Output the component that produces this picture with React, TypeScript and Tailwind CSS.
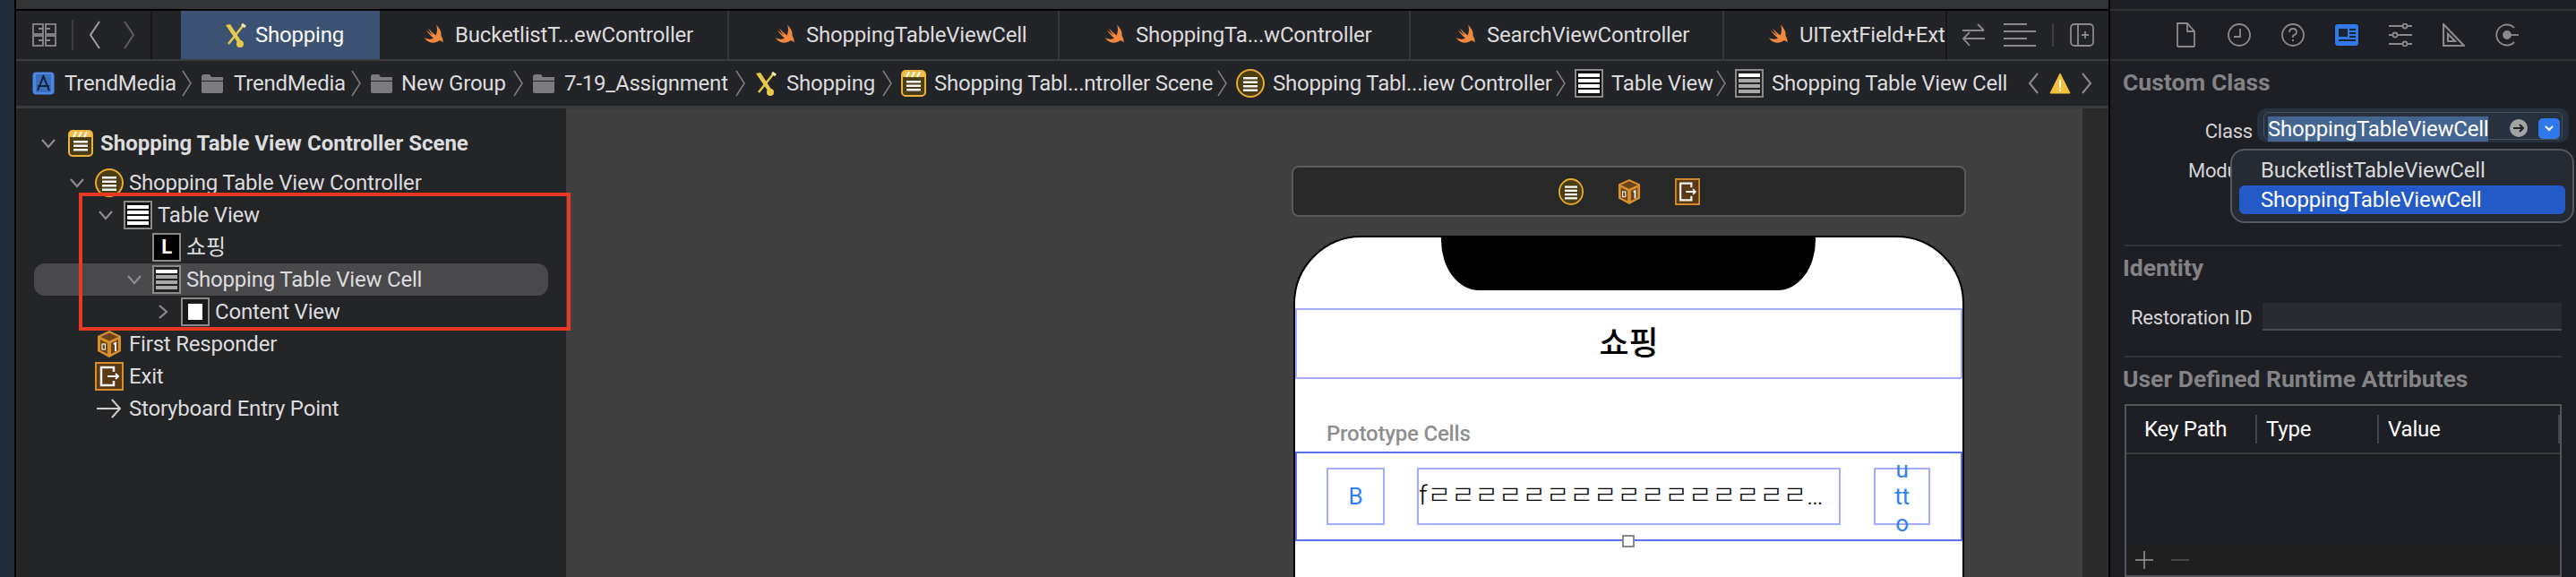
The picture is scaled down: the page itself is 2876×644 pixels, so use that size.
import React from 'react';

const SwiftIcon = () => (
  <svg width="26" height="26" viewBox="0 0 24 24" className="shrink-0">
    <path fill="#f0873f" d="M14 1.500C17.500 5 19.600 9 19 13c1.600 2.200 2.200 5 1.600 7-1-1.800-2.800-2.600-4-2-2.600 2-6.600 2.600-10 1.200C4.400 18.200 2.800 16.400 1.500 14.500 5 16.800 8.500 16.800 11 15.200 8 13 5.500 10 3.500 7c2.500 2.200 5 4.200 7 5.400-2-2.200-3.600-4.600-5-7.400 3 3.400 6 6 8 7.200 1.600-3 1.600-7 .5-10.700z" />
  </svg>
);

const HammerIcon = () => (
  <svg width="26" height="30" viewBox="0 0 26 30" className="shrink-0">
    <path d="M2 4 L7 3 L20 23 L17 26 Z" fill="#e8c84a" />
    <circle cx="18" cy="25" r="4" fill="#e8c84a" />
    <path d="M21 5 L5 25" stroke="#e8c84a" strokeWidth="2.500" />
    <path d="M20 3 L24 6" stroke="#f3e7b0" strokeWidth="3" />
  </svg>
);

const AppIcon = () => (
  <svg width="25" height="26" viewBox="0 0 25 26" className="shrink-0">
    <rect x="0.500" y="0.500" width="24" height="25" rx="4" fill="#4a88e4" />
    <rect x="4" y="3" width="17" height="20" fill="#3a6fc0" />
    <path d="M13 4 L6 21 M12 4 L19 21 M6 16 H19" stroke="#12233f" strokeWidth="2" fill="none" />
  </svg>
);

const FolderIcon = () => (
  <svg width="26" height="24" viewBox="0 0 26 24" className="shrink-0">
    <path d="M1 5 Q1 2 4 2 H10 L12 5 H25 V9 H1 Z" fill="#7c7c7e" />
    <path d="M1 10 H25 V21 Q25 23 23 23 H3 Q1 23 1 21 Z" fill="#7c7c7e" />
  </svg>
);

const Bars = ({ y, x = 8, w = 14 }: { y: number[]; x?: number; w?: number }) => (
  <>
    {y.map((v) => (
      <rect key={v} x={x} y={v} width={w} height="2.500" fill="#f5f5f5" />
    ))}
  </>
);

const SceneIcon = () => (
  <svg width="28" height="30" viewBox="0 0 28 30" className="shrink-0">
    <rect x="1" y="1" width="26" height="28" rx="4" fill="#4b3d14" stroke="#eeb23a" strokeWidth="2" />
    <rect x="2" y="2" width="24" height="6" fill="#f0c04a" />
    <path d="M6 8 L9 2 M12 8 L15 2 M18 8 L21 2" stroke="#fff" strokeWidth="2" />
    <Bars y={[12, 16.500, 21]} x={6} w={16} />
  </svg>
);

const ControllerIcon = ({ w = 32, h = 32 }: { w?: number; h?: number }) => (
  <svg width={w} height={h} viewBox="0 0 32 32" preserveAspectRatio="none" className="shrink-0">
    <ellipse cx="16" cy="16" rx="15" ry="15" fill="#4b3d14" stroke="#e8ac32" strokeWidth="2" />
    <Bars y={[9, 13.500, 18, 22.500]} x={8} w={16} />
  </svg>
);

const CubeIcon = ({ w = 28, h = 32 }: { w?: number; h?: number }) => (
  <svg width={w} height={h} viewBox="0 0 28 32" preserveAspectRatio="none" className="shrink-0">
    <path d="M14 1 L27 7 V24 L14 31 L1 24 V7 Z" fill="#d98e30" />
    <path d="M14 3.500 L24 8 L14 12.500 L4 8 Z" fill="#6b4518" />
    <path d="M4 11 L12 15 V27 L4 23 Z" fill="#6b4518" />
    <path d="M16 15 L24 11 V23 L16 27 Z" fill="#6b4518" />
    <rect x="6" y="16" width="3.500" height="6" fill="none" stroke="#f2f2f2" strokeWidth="1.200" />
    <path d="M19 16 L21 15 V24" stroke="#f2f2f2" strokeWidth="2" fill="none" />
  </svg>
);

const ExitIcon = ({ w = 32, h = 32 }: { w?: number; h?: number }) => (
  <svg width={w} height={h} viewBox="0 0 32 32" preserveAspectRatio="none" className="shrink-0">
    <rect x="1" y="1" width="30" height="30" fill="#5a3a16" stroke="#d98e30" strokeWidth="2" />
    <path d="M21 11 V6 H7 V26 H21 V21" fill="none" stroke="#f2f2f2" strokeWidth="2.500" />
    <path d="M14 16 H26 M23 13 L26 16 L23 19" fill="none" stroke="#f2f2f2" strokeWidth="2" />
  </svg>
);

const TableIcon = () => (
  <svg width="32" height="32" viewBox="0 0 32 32" className="shrink-0">
    <rect x="1" y="1" width="30" height="30" fill="#111" stroke="#8a8a8a" strokeWidth="2" />
    <rect x="4" y="5" width="24" height="4" fill="#fff" />
    <rect x="4" y="11" width="24" height="4" fill="#fff" />
    <rect x="4" y="17" width="24" height="4" fill="#fff" />
    <rect x="4" y="23" width="24" height="4" fill="#fff" />
  </svg>
);

const CellIcon = () => (
  <svg width="32" height="32" viewBox="0 0 32 32" className="shrink-0">
    <rect x="1" y="1" width="30" height="30" fill="#222" stroke="#8a8a8a" strokeWidth="2" />
    <rect x="4" y="5" width="24" height="4" fill="#fff" />
    <rect x="4" y="11" width="24" height="4" fill="#a8a8a8" />
    <rect x="4" y="17" width="24" height="4" fill="#a8a8a8" />
    <rect x="4" y="23" width="24" height="4" fill="#a8a8a8" />
  </svg>
);

const LabelIcon = () => (
  <div className="w-[32px] h-[32px] shrink-0 bg-black border-2 border-[#8a8a8a] flex items-center justify-center text-white text-[22px] font-bold leading-none">L</div>
);

const ContentIcon = () => (
  <div className="w-[32px] h-[32px] shrink-0 bg-[#1a1a1a] border-2 border-[#8a8a8a] flex items-center justify-center">
    <div className="w-[16px] h-[18px] bg-white" />
  </div>
);

const Chevron = ({ open = true, className = '' }: { open?: boolean; className?: string }) => (
  <svg width="18" height="18" viewBox="0 0 18 18" className={`shrink-0 ${className}`}>
    <path d={open ? 'M2 5 L9 13 L16 5' : 'M5 2 L13 9 L5 16'} fill="none" stroke="#8c8c8e" strokeWidth="2.200" />
  </svg>
);

const CrumbSep = () => (
  <svg width="12" height="30" viewBox="0 0 12 30" className="shrink-0">
    <path d="M1 1 L10 15 L1 29" fill="none" stroke="#7e7e80" strokeWidth="1.500" />
  </svg>
);

const Crumb = ({ icon, label, width, last }: { icon: React.ReactNode; label: string; width: string; last?: boolean }) => (
  <>
    {icon}
    <span className={`whitespace-nowrap shrink-0 ${width}`}>{label}</span>
    {!last && <CrumbSep />}
  </>
);

const tabs = [
  { label: 'BucketlistT...ewController', cls: 'w-[390px] pl-[48px] border-r-2 border-[#37383b]' },
  { label: 'ShoppingTableViewCell', cls: 'w-[369px] pl-[50px] border-r-2 border-[#37383b]' },
  { label: 'ShoppingTa...wController', cls: 'w-[392px] pl-[49px] border-r-2 border-[#37383b]' },
  { label: 'SearchViewController', cls: 'w-[350px] pl-[49px] border-r-2 border-[#37383b]' },
  { label: 'UITextField+Extension', cls: 'w-[247px] pl-[48px]' },
];

const TabBar = () => (
  <div className="h-[54px] shrink-0 flex items-stretch bg-[#232427] text-[#dcdcde]">
    <div className="w-[152px] shrink-0 flex items-center pl-[18px] border-r-2 border-[#161618]">
      <svg width="27" height="26" viewBox="0 0 27 26" fill="none" stroke="#8a8a8c" strokeWidth="1.800">
        <rect x="1" y="1" width="11" height="11" />
        <rect x="15" y="1" width="11" height="11" />
        <rect x="1" y="14" width="11" height="11" />
        <rect x="15" y="14" width="11" height="11" />
        <path d="M7 6 H12 M15 6 H20 M7 19 H12 M15 19 H20" />
      </svg>
      <div className="w-[2px] h-[34px] bg-[#3e3e40] ml-[17px]" />
      <svg width="14" height="34" viewBox="0 0 14 34" className="ml-[17px]" fill="none" stroke="#a0a0a2" strokeWidth="2">
        <path d="M12 2 L2 17 L12 32" />
      </svg>
      <svg width="14" height="34" viewBox="0 0 14 34" className="ml-[24px]" fill="none" stroke="#5e5e60" strokeWidth="2">
        <path d="M2 2 L12 17 L2 32" />
      </svg>
    </div>
    <div className="w-[32px] shrink-0" />
    <div className="w-[222px] shrink-0 bg-[#3b5272] flex items-center pl-[48px] gap-[9px] text-white">
      <HammerIcon />
      <span>Shopping</span>
    </div>
    {tabs.map((t) => (
      <div key={t.label} className={`shrink-0 flex items-center gap-[10px] whitespace-nowrap overflow-hidden ${t.cls}`}>
        <SwiftIcon />
        <span>{t.label}</span>
      </div>
    ))}
    <div className="flex-1 flex items-center border-l-2 border-[#161618] pl-[16px]">
      <svg width="27" height="28" viewBox="0 0 27 28" fill="none" stroke="#8a8a8c" strokeWidth="1.800" className="shrink-0">
        <path d="M1 9 H25 M18 2 L25 9 M26 18 H2 M9 11 L2 18 L9 26" />
      </svg>
      <svg width="36" height="26" viewBox="0 0 36 26" className="ml-[20px] shrink-0" fill="none" stroke="#8a8a8c" strokeWidth="2">
        <path d="M0 1 H26 M0 9 H36 M0 17 H26 M0 25 H36" />
      </svg>
      <div className="w-[2px] h-[26px] shrink-0 bg-[#3e3e40] ml-[18px]" />
      <svg width="27" height="26" viewBox="0 0 27 26" className="ml-[18px] shrink-0" fill="none" stroke="#8a8a8c" strokeWidth="1.800">
        <rect x="1" y="1" width="25" height="24" rx="4" />
        <path d="M9 1 V25 M13 13 H21 M17 9 V17" />
      </svg>
    </div>
  </div>
);

const Breadcrumb = () => (
  <div className="h-[52px] shrink-0 flex items-center pl-[18px] gap-[9px] bg-[#232427] border-t-2 border-[#3a3b3d] text-[#dcdcde]">
    <Crumb icon={<AppIcon />} label="TrendMedia" width="w-[122px] ml-[2px]" />
    <Crumb icon={<FolderIcon />} label="TrendMedia" width="w-[122px] ml-[2px]" />
    <Crumb icon={<FolderIcon />} label="New Group" width="w-[116px]" />
    <Crumb icon={<FolderIcon />} label="7-19_Assignment" width="w-[182px] ml-[1px]" />
    <Crumb icon={<HammerIcon />} label="Shopping" width="w-[98px] ml-[1px]" />
    <Crumb icon={<SceneIcon />} label="Shopping Tabl...ntroller Scene" width="w-[307px]" />
    <Crumb icon={<ControllerIcon />} label="Shopping Tabl...iew Controller" width="w-[307px]" />
    <Crumb icon={<TableIcon />} label="Table View" width="w-[108px]" />
    <Crumb icon={<CellIcon />} label="Shopping Table View Cell" width="w-[264px]" last />
    <svg width="12" height="24" viewBox="0 0 12 24" className="ml-[13px] shrink-0" fill="none" stroke="#8a8a8c" strokeWidth="2">
      <path d="M11 1 L2 12 L11 23" />
    </svg>
    <svg width="24" height="24" viewBox="0 0 24 24" className="ml-[3px] shrink-0">
      <path d="M12 1 L23 23 H1 Z" fill="#f4c13a" stroke="#f4c13a" strokeLinejoin="round" />
      <rect x="11" y="8" width="2" height="9" fill="#fff" />
      <rect x="11" y="18.500" width="2" height="2.500" fill="#fff" />
    </svg>
    <svg width="12" height="24" viewBox="0 0 12 24" className="ml-[3px] shrink-0" fill="none" stroke="#8a8a8c" strokeWidth="2">
      <path d="M1 1 L10 12 L1 23" />
    </svg>
  </div>
);

const Row = ({ indent, chevron, icon, label, bold, selected }: { indent: string; chevron?: 'open' | 'closed'; icon: React.ReactNode; label: string; bold?: boolean; selected?: boolean }) => (
  <div className={`relative h-[36px] flex items-center ${indent}`}>
    {selected && <div className="absolute left-[20px] w-[574px] h-[36px] rounded-[12px] bg-[#49494b]" />}
    <div className="relative w-[20px] shrink-0 flex justify-center">
      {chevron && <Chevron open={chevron === 'open'} />}
    </div>
    <div className="relative ml-[10px] flex items-center gap-[6px] whitespace-nowrap">
      <div className="w-[32px] shrink-0 flex justify-center">{icon}</div>
      <span className={bold ? 'font-bold tracking-normal' : ''}>{label}</span>
    </div>
  </div>
);

const Outline = () => (
  <div className="relative w-[614px] shrink-0 bg-[#242527] text-[#dcdcde] pt-[21px]">
    <div className="h-[44px]">
      <Row indent="pl-[26px]" chevron="open" icon={<SceneIcon />} label="Shopping Table View Controller Scene" bold />
    </div>
    <Row indent="pl-[58px]" chevron="open" icon={<ControllerIcon />} label="Shopping Table View Controller" />
    <Row indent="pl-[90px]" chevron="open" icon={<TableIcon />} label="Table View" />
    <Row indent="pl-[122px]" icon={<LabelIcon />} label="쇼핑" />
    <Row indent="pl-[122px]" chevron="open" icon={<CellIcon />} label="Shopping Table View Cell" selected />
    <Row indent="pl-[154px]" chevron="closed" icon={<ContentIcon />} label="Content View" />
    <Row indent="pl-[58px]" icon={<CubeIcon />} label="First Responder" />
    <Row indent="pl-[58px]" icon={<ExitIcon />} label="Exit" />
    <Row indent="pl-[58px]" icon={
      <svg width="28" height="24" viewBox="0 0 28 24" fill="none" stroke="#d0d0d0" strokeWidth="2"><path d="M0 12 H26 M17 2 L26 12 L17 22" /></svg>
    } label="Storyboard Entry Point" />
    {/* красная рамка поверх дерева */}
    <div className="absolute z-10 left-[70px] top-[94px] w-[549px] h-[154px] border-[4px] border-[#e83a20] pointer-events-none" />
  </div>
);

const Canvas = () => (
  <div className="flex-1 flex bg-[#404040] min-w-0 overflow-hidden">
    <div className="flex-1 pl-[810px] pt-[64px] min-w-0">
      <div className="w-[753px] h-[57px] bg-[#282828] border-2 border-[#5a5a5a] rounded-[8px] flex items-center justify-center gap-[38px]">
        <ControllerIcon w={28} h={30} />
        <CubeIcon w={26} h={30} />
        <ExitIcon w={28} h={30} />
      </div>
      <div className="relative mt-[21px] ml-[2px] w-[749px] h-[400px] bg-white border-2 border-black rounded-t-[76px]">
        <div className="absolute left-[163px] -top-[2px] w-[418px] h-[61px] bg-black rounded-bl-[42px_56px] rounded-br-[42px_56px]" />
        <div className="pt-[79px]">
          <div className="h-[79px] border-2 border-[#a3abff] flex items-center justify-center text-[36px] font-medium text-black">쇼핑</div>
        </div>
        <div className="h-[81px] pl-[35px] pt-[46px] text-[24px] font-medium text-[#8e8e90] leading-[30px]">Prototype Cells</div>
        <div className="relative h-[100px] border-2 border-[#5a70f0] flex items-center pl-[33px] text-[26px]">
          <div className="w-[65px] h-[64px] border-2 border-[#a3abff] flex items-center justify-center text-[#2f80f0]">B</div>
          <div className="ml-[36px] w-[473px] h-[64px] border-2 border-[#a3abff] flex items-center text-black whitespace-nowrap overflow-hidden">
            <span className="w-[466px] truncate font-light text-[29px]">fㄹㄹㄹㄹㄹㄹㄹㄹㄹㄹㄹㄹㄹㄹㄹㄹㄹㄹㄹㄹㄹㄹㄹ</span>
          </div>
          <div className="relative ml-[37px] w-[63px] h-[64px] border-2 border-[#a3abff] flex flex-col items-center justify-center text-[#2f80f0] leading-[30px]">
            <span>u</span>
            <span>tt</span>
            <span>o</span>
          </div>
          <div className="absolute left-[363px] -bottom-[9px] w-[14px] h-[14px] bg-white border-2 border-[#8a8a8a]" />
        </div>
      </div>
    </div>
    <div className="w-[29px] shrink-0 bg-[#2a2a2a]" />
  </div>
);

const Separator = () => <div className="h-[2px] mx-[16px] bg-[#33343a]" />;

const InspectorTabs = () => (
  <div className="h-[54px] pl-[71px] flex items-center gap-[34px]">
    <svg width="26" height="28" viewBox="0 0 26 28" fill="none" stroke="#8a8a8c" strokeWidth="1.800">
      <path d="M4 1 H15 L23 10 V26 Q23 27 22 27 H5 Q4 27 4 26 Z M15 1 V10 H23" />
    </svg>
    <svg width="26" height="26" viewBox="0 0 26 26" fill="none" stroke="#8a8a8c" strokeWidth="1.800">
      <circle cx="13" cy="13" r="12" />
      <path d="M14 6 V15 H7" />
    </svg>
    <svg width="26" height="26" viewBox="0 0 26 26" fill="none" stroke="#8a8a8c" strokeWidth="1.800">
      <circle cx="13" cy="13" r="12" />
      <path d="M9 10 Q9 6 13 6 Q17 6 17 10 Q17 12 13 14 V16 M13 18 V20" />
    </svg>
    <svg width="26" height="24" viewBox="0 0 26 24">
      <rect width="26" height="24" rx="3" fill="#2f79ea" />
      <rect x="4" y="5" width="10" height="9" fill="#1b2430" />
      <path d="M16 6 H23 M16 10 H23 M16 14 H23 M4 18 H23" stroke="#1b2430" strokeWidth="2" />
    </svg>
    <svg width="26" height="26" viewBox="0 0 26 26" fill="none" stroke="#8a8a8c" strokeWidth="1.800">
      <path d="M0 3 H15 M21 3 H26 M0 13 H4 M10 13 H26 M0 23 H15 M21 23 H26" />
      <circle cx="18" cy="3" r="2.500" />
      <circle cx="7" cy="13" r="2.500" />
      <circle cx="18" cy="23" r="2.500" />
    </svg>
    <svg width="25" height="26" viewBox="0 0 25 26" fill="none" stroke="#8a8a8c" strokeWidth="2.200">
      <path d="M1 1 V25 H24 Z M6 12 V20 H14 Z" />
    </svg>
    <svg width="26" height="26" viewBox="0 0 26 26" fill="none" stroke="#8a8a8c" strokeWidth="1.800">
      <path d="M21 5 A11.500 11.500 0 1 0 21 21" />
      <circle cx="13" cy="13" r="4" fill="#8a8a8c" />
      <path d="M17 13 H26" />
    </svg>
  </div>
);

const SectionTitle = ({ children, className = '' }: { children: React.ReactNode; className?: string }) => (
  <div className={`pl-[14px] font-bold text-[#838386] text-[26.5px] tracking-normal leading-[30px] ${className}`}>{children}</div>
);

const Inspector = () => (
  <div className="flex-1 min-w-0 bg-[#1e1f24] text-[#d4d4d6] overflow-hidden">
    <div className="h-[12px] border-b-2 border-[#313236]" />
    <InspectorTabs />
    <div className="h-[2px] bg-[#313236]" />
    <SectionTitle className="pt-[9px]">Custom Class</SectionTitle>
    <div className="relative h-[166px]">
      <div className="absolute left-[164px] top-[14px] w-[348px] h-[38px] rounded-[10px] bg-[#26303f] flex items-center">
        <div className="ml-[7px] w-[334px] h-[31px] border border-[#4a4f58] rounded-[6px] relative">
          <span className="absolute left-[4px] top-[4px] h-[28px] leading-[28px] bg-[#44658f] text-white whitespace-nowrap">ShoppingTableViewCell</span>
          <div className="absolute left-[274px] top-[7px] w-[20px] h-[20px] rounded-full bg-[#a2a2a4] flex items-center justify-center">
            <svg width="14" height="12" viewBox="0 0 14 12" fill="none" stroke="#222" strokeWidth="2"><path d="M1 6 H12 M8 2 L12 6 L8 10" /></svg>
          </div>
          <div className="absolute left-[306px] top-[6px] w-[24px] h-[23px] rounded-[5px] bg-[#2f79ea] flex items-center justify-center">
            <svg width="10" height="8" viewBox="0 0 10 8" fill="none" stroke="#fff" strokeWidth="2"><path d="M1 2 L5 6 L9 2" /></svg>
          </div>
        </div>
      </div>
      <div className="absolute right-[361px] top-[25px] leading-[30px] text-[22px]">Class</div>
      <div className="absolute right-[361px] top-[69px] leading-[30px] text-[22px]">Module</div>
      <div className="absolute left-[134px] top-[59px] w-[384px] h-[83px] rounded-[16px] bg-[#262a33] border-2 border-[#55585f] px-[8px] pt-[6px] text-[#d8d8da]">
        <div className="h-[32px] pl-[24px] leading-[32px]">BucketlistTableViewCell</div>
        <div className="h-[32px] mt-[1px] pl-[24px] leading-[32px] rounded-[6px] bg-[#2459c8] text-white">ShoppingTableViewCell</div>
      </div>
    </div>
    <Separator />
    <SectionTitle className="pt-[9px]">Identity</SectionTitle>
    <div className="h-[83px] flex items-start pt-[24px] pl-[23px]">
      <span className="leading-[34px] whitespace-nowrap w-[147px] text-[22px]">Restoration ID</span>
      <div className="w-[334px] h-[31px] bg-[#2a2b30] border-b-2 border-[#4a4b50]" />
    </div>
    <Separator />
    <SectionTitle className="pt-[9px]">User Defined Runtime Attributes</SectionTitle>
    <div className="mt-[13px] ml-[16px] w-[488px] h-[193px] border-2 border-[#55565a] flex flex-col">
      <div className="h-[54px] shrink-0 border-b-2 border-[#3a3b3f] flex items-center text-white">
        <div className="w-[146px] pl-[20px] h-[32px] leading-[32px] border-r-2 border-[#44454a]">Key Path</div>
        <div className="w-[136px] pl-[10px] h-[32px] leading-[32px] border-r-2 border-[#44454a]">Type</div>
        <div className="flex-1 pl-[10px] h-[32px] leading-[32px] border-r-2 border-[#44454a]">Value</div>
      </div>
      <div className="flex-1" />
      <div className="h-[34px] shrink-0 bg-[#1f1f1f] flex items-center pl-[10px] gap-[20px]">
        <svg width="20" height="20" viewBox="0 0 20 20" fill="none" stroke="#9a9a9c" strokeWidth="1.500"><path d="M0 10 H20 M10 0 V20" /></svg>
        <svg width="20" height="4" viewBox="0 0 20 4" fill="none" stroke="#55565a" strokeWidth="1.500"><path d="M0 2 H20" /></svg>
      </div>
    </div>
  </div>
);

export default function App() {
  return (
    <div className="w-[2876px] h-[644px] flex overflow-hidden bg-[#1e1f24] text-[24px] tracking-[-0.2px] font-['Roboto','Noto_Sans_CJK_KR',sans-serif]">
      <div className="w-[16px] shrink-0 bg-[#1e2a3a]" />
      <div className="w-[2340px] shrink-0 flex flex-col border-x-2 border-black">
        <div className="h-[12px] shrink-0 bg-[#333436] border-b-2 border-black" />
        <TabBar />
        <Breadcrumb />
        <div className="h-[3px] shrink-0 bg-[#3a3b3d]" />
        <div className="flex-1 flex min-h-0">
          <Outline />
          <Canvas />
        </div>
      </div>
      <Inspector />
    </div>
  );
}
